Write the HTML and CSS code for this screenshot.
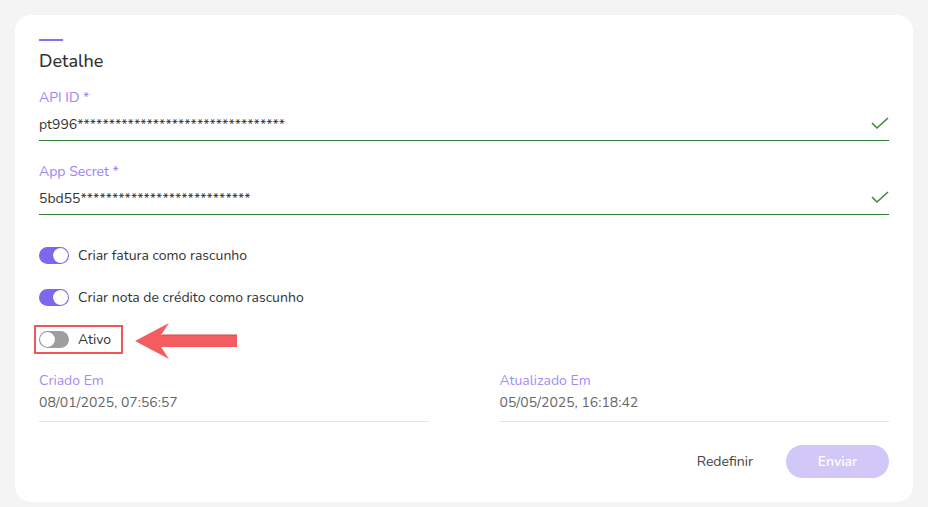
FILE: index.html
```html
<!DOCTYPE html>
<html lang="pt">

<head>
  <meta charset="utf-8">
  <meta name="viewport" content="width=device-width, initial-scale=1">
  <title>Detalhe</title>
  <link rel="stylesheet" href="styles.css">
</head>

<body>
  <div class="card">
    <div class="title-bar"></div>
    <h2 class="title">Detalhe</h2>

    <div class="field">
      <label for="api_id">API ID *</label>
      <div class="input-wrap">
        <input type="text" id="api_id" value="pt996*********************************">
        <svg class="check" width="18" height="14" viewBox="0 0 18 14">
          <path d="M1 6 L6 11 L17 1" fill="none" stroke="#3b8a3e" stroke-width="1.6"/>
        </svg>
      </div>
    </div>

    <div class="field">
      <label for="app_secret">App Secret *</label>
      <div class="input-wrap">
        <input type="text" id="app_secret" value="5bd55***************************">
        <svg class="check" width="18" height="14" viewBox="0 0 18 14">
          <path d="M1 6 L6 11 L17 1" fill="none" stroke="#3b8a3e" stroke-width="1.6"/>
        </svg>
      </div>
    </div>

    <div class="switches">
      <div class="switch-row">
        <span class="switch on"><span class="knob"></span></span>
        <span>Criar fatura como rascunho</span>
      </div>
      <div class="switch-row">
        <span class="switch on"><span class="knob"></span></span>
        <span>Criar nota de crédito como rascunho</span>
      </div>
      <div class="switch-row marked">
        <span class="switch"><span class="knob"></span></span>
        <span>Ativo</span>
        <svg class="arrow" width="102" height="36" viewBox="0 0 102 36">
          <path d="M0 18 L34 0 L26 12 L102 12 L102 24 L26 24 L34 36 Z" fill="#f45d5f"/>
          <rect x="27" y="11" width="75" height="2" fill="#d24a4c" opacity="0.5"/>
        </svg>
      </div>
    </div>

    <div class="meta">
      <div class="meta-item">
        <div class="meta-label">Criado Em</div>
        <div class="meta-value">08/01/2025, 07:56:57</div>
      </div>
      <div class="meta-item">
        <div class="meta-label">Atualizado Em</div>
        <div class="meta-value">05/05/2025, 16:18:42</div>
      </div>
    </div>

    <div class="actions">
      <button type="button" class="btn-reset">Redefinir</button>
      <button type="submit" class="btn-send" disabled>Enviar</button>
    </div>
  </div>
</body>

</html>
```

FILE: styles.css
```css
body {
  margin: 0;
  padding: 15px;
  background: #f4f4f4;
  font-family: 'Nunito', 'Lato', 'Noto Sans', sans-serif;
  color: #333;
}

.card {
  background: #fff;
  border-radius: 16px;
  padding: 24px 24px 24px 24px;
  height: 487px;
  box-sizing: border-box;
}

.title-bar {
  width: 24px;
  height: 2px;
  background: #8b6cf0;
}

.title {
  margin: 8px 0 0;
  font-size: 18px;
  font-weight: 500;
  line-height: 24px;
  color: #333;
}

.field {
  margin-top: 15px;
}

.field + .field {
  margin-top: 21px;
}

.field label {
  display: block;
  font-size: 14px;
  line-height: 20px;
  color: #9b82f3;
}

.input-wrap {
  display: flex;
  align-items: center;
  height: 32px;
  border-bottom: 1px solid #2e7d32;
}

.input-wrap input {
  flex: 1;
  border: none;
  outline: none;
  padding: 0;
  font-family: inherit;
  font-size: 14px;
  color: #333;
  background: transparent;
}

.switches {
  margin-top: 26px;
  display: flex;
  flex-direction: column;
  align-items: flex-start;
  gap: 14px;
}

.switch-row {
  display: flex;
  align-items: center;
  gap: 9px;
  height: 28px;
  font-size: 14px;
  color: #333;
}

.switch {
  position: relative;
  width: 30px;
  height: 17px;
  border-radius: 9px;
  background: #9e9e9e;
}

.switch.on {
  background: #7d67ee;
}

.knob {
  position: absolute;
  top: 1px;
  left: 1px;
  width: 15px;
  height: 15px;
  border-radius: 50%;
  background: #fff;
  box-shadow: 0 0 1px rgba(0, 0, 0, 0.3);
}

.switch.on .knob {
  left: 14px;
}

.marked {
  position: relative;
  border: 2px solid #f0575b;
  padding: 0 10px 0 3px;
  margin-left: -5px;
  height: 25px;
}

.arrow {
  position: absolute;
  left: 99px;
  top: -4px;
}

.meta {
  margin-top: 17px;
  display: grid;
  grid-template-columns: 1fr 1fr;
  column-gap: 71px;
}

.meta-item {
  border-bottom: 1px solid #e4e4e4;
  padding-bottom: 6px;
}

.meta-label {
  font-size: 14px;
  line-height: 20px;
  color: #a58cf4;
}

.meta-value {
  font-size: 14px;
  line-height: 24px;
  color: #666;
}

.actions {
  margin-top: 23px;
  display: flex;
  justify-content: flex-end;
  align-items: center;
  gap: 17px;
}

.btn-reset {
  background: none;
  border: none;
  font-family: inherit;
  font-size: 14px;
  color: #444;
  padding: 0 16px;
  height: 33px;
  cursor: pointer;
}

.btn-send {
  width: 103px;
  height: 33px;
  border: none;
  border-radius: 17px;
  background: #d1c8f8;
  color: #fff;
  font-family: inherit;
  font-size: 14px;
  font-weight: 600;
}
```
